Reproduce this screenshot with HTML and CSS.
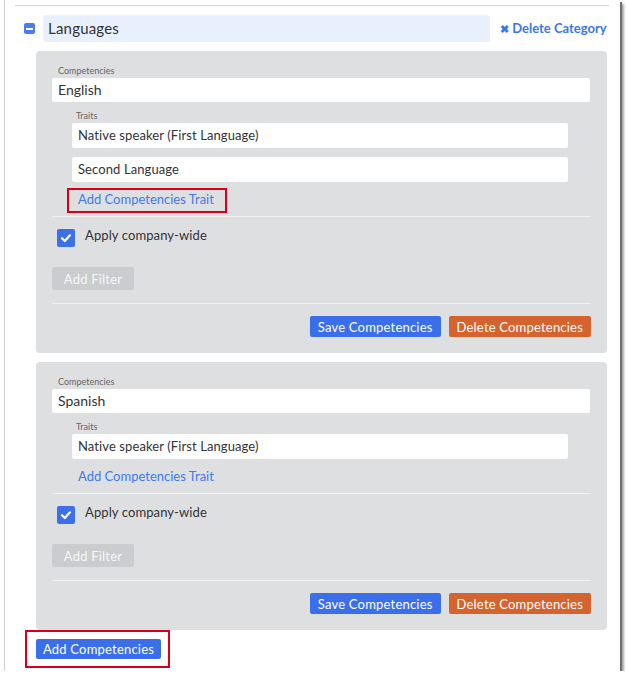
FILE: index.html
```html
<!DOCTYPE html>
<html lang="en">
<head>
<meta charset="utf-8">
<title>Languages</title>
<link rel="stylesheet" href="styles.css">
</head>
<body>
<div class="window">
  <div class="top-rule"></div>
  <div class="cat-header">
    <span class="collapse-icon"><span class="bar"></span></span>
    <div class="cat-name">Languages</div>
    <a class="delete-cat" href="#"><span class="x">&#10006;</span> Delete Category</a>
  </div>
  <div class="cards">
    <div class="card">
      <div class="label">Competencies</div>
      <div class="input main">English</div>
      <div class="traits">
        <div class="label">Traits</div>
        <div class="input trait">Native speaker (First Language)</div>
        <div class="input trait">Second Language</div>
        <a class="add-trait highlight" href="#">Add Competencies Trait</a>
      </div>
      <div class="rule"></div>
      <label class="check-row"><span class="checkbox"><svg viewBox="0 0 18 18" width="18" height="18"><path d="M5 9.2 L7.8 12 L13 6.3" fill="none" stroke="#fff" stroke-width="2.2" stroke-linecap="round" stroke-linejoin="round"/></svg></span><span class="check-text">Apply company-wide</span></label>
      <button class="btn btn-disabled">Add Filter</button>
      <div class="rule rule-2"></div>
      <div class="actions">
        <button class="btn btn-primary">Save Competencies</button>
        <button class="btn btn-danger">Delete Competencies</button>
      </div>
    </div>
    <div class="card">
      <div class="label">Competencies</div>
      <div class="input main">Spanish</div>
      <div class="traits">
        <div class="label">Traits</div>
        <div class="input trait">Native speaker (First Language)</div>
        <a class="add-trait" href="#">Add Competencies Trait</a>
      </div>
      <div class="rule"></div>
      <label class="check-row"><span class="checkbox"><svg viewBox="0 0 18 18" width="18" height="18"><path d="M5 9.2 L7.8 12 L13 6.3" fill="none" stroke="#fff" stroke-width="2.2" stroke-linecap="round" stroke-linejoin="round"/></svg></span><span class="check-text">Apply company-wide</span></label>
      <button class="btn btn-disabled">Add Filter</button>
      <div class="rule rule-2"></div>
      <div class="actions">
        <button class="btn btn-primary">Save Competencies</button>
        <button class="btn btn-danger">Delete Competencies</button>
      </div>
    </div>
    <div class="add-wrap">
      <button class="btn btn-primary btn-add highlight">Add Competencies</button>
    </div>
  </div>
</div>
</body>
</html>
```

FILE: styles.css
```css
* { box-sizing: border-box; }
html, body { margin: 0; padding: 0; background: #ffffff; }
body {
  font-family: "Lato", "Open Sans", "Liberation Sans", sans-serif;
  color: #333;
}
.window {
  margin-left: 4px;
  width: 616px;
  height: 671px;
  border-left: 1px solid #cfcfcf;
  background: #fff;
  box-shadow: 2px 2px 0 #6e6e6e, 4px 4px 2px rgba(0,0,0,0.35);
  overflow: hidden;
}
.top-rule {
  margin: 5px 0 0 10px;
  width: 594px;
  height: 1px;
  background: #d4d4d4;
}
.cat-header {
  display: flex;
  align-items: center;
  margin-top: 9px;
  padding-left: 19px;
  height: 27px;
}
.collapse-icon {
  width: 11px;
  height: 11px;
  border-radius: 2px;
  background: #4a7cf0;
  display: flex;
  align-items: center;
  justify-content: center;
}
.collapse-icon .bar { width: 7px; height: 2px; background: #fff; }
.cat-name {
  margin-left: 8px;
  width: 447px;
  height: 27px;
  background: #e8f0fd;
  border-radius: 3px;
  padding-left: 5px;
  font-size: 15px;
  line-height: 26px;
  letter-spacing: 0.2px;
  color: #333;
}
.delete-cat {
  margin-left: 10px;
  margin-top: -2px;
  color: #3a78e6;
  font-weight: 700;
  font-size: 13px;
  text-decoration: none;
  white-space: nowrap;
}
.delete-cat .x { font-size: 11px; }
.cards { padding-left: 31px; width: 602px; }
.card {
  margin-top: 9px;
  background: #dedfe1;
  border-radius: 4px;
  padding: 14px 16px 16px 16px;
}
.label {
  font-size: 9px;
  line-height: 11px;
  color: #666;
  margin-bottom: 2px;
  padding-left: 6px;
}
.traits .label { padding-left: 4px; }
.input {
  background: #fff;
  border-radius: 2px;
  height: 25px;
  line-height: 25px;
  padding-left: 6px;
  font-size: 14px;
  color: #333;
}
.input.main { height: 24px; line-height: 24px; margin-right: 1px; }
.traits {
  margin: 8px 23px 0 20px;
  display: flex;
  flex-direction: column;
  align-items: flex-start;
}
.traits .input { align-self: stretch; }
.input.trait { font-size: 13px; margin-bottom: 9px; padding-left: 6px; letter-spacing: 0.1px; }
.add-trait {
  position: relative;
  display: inline-block;
  margin: -1px 0 0 6px;
  line-height: 18px;
  font-size: 13px;
  color: #3f7ae8;
  text-decoration: none;
}
.add-trait.highlight::after {
  content: "";
  position: absolute;
  top: -2px; bottom: -5px; left: -11px; right: -13px;
  border: 2px solid #d6001c;
}
.rule { height: 1px; background: #f1f1f2; margin-top: 8px; }
.check-row {
  display: flex;
  align-items: flex-start;
  margin-top: 12px;
  padding-left: 5px;
}
.checkbox {
  width: 18px; height: 18px;
  border-radius: 2px;
  background: #3b70e9;
  display: block;
}
.checkbox svg { display: block; }
.check-text { margin-left: 10px; margin-top: -1px; font-size: 13px; line-height: 14px; color: #333; letter-spacing: 0.1px; }
.btn {
  font-family: inherit;
  border: none;
  border-radius: 2px;
  font-size: 13px;
  height: 21px;
  padding: 0 8px;
  letter-spacing: 0.2px;
  color: #fff;
  white-space: nowrap;
  cursor: pointer;
}
.btn-disabled {
  display: block;
  margin-top: 20px;
  height: 23px;
  width: 82px;
  background: #cbccd0;
  color: #f6f6f7;
}
.rule-2 { margin-top: 13px; }
.actions {
  display: flex;
  justify-content: flex-end;
  gap: 8px;
  margin-top: 12px;
}
.btn-primary { background: #3b6fe9; }
.btn-danger { background: #d5632e; }
.add-wrap { padding-top: 9px; }
.btn-add { position: relative; display: block; height: 20px; padding: 0 7px; }
.btn-add.highlight::after {
  content: "";
  position: absolute;
  top: -9px; bottom: -9px; left: -11px; right: -9px;
  border: 2px solid #d6001c;
}
```
